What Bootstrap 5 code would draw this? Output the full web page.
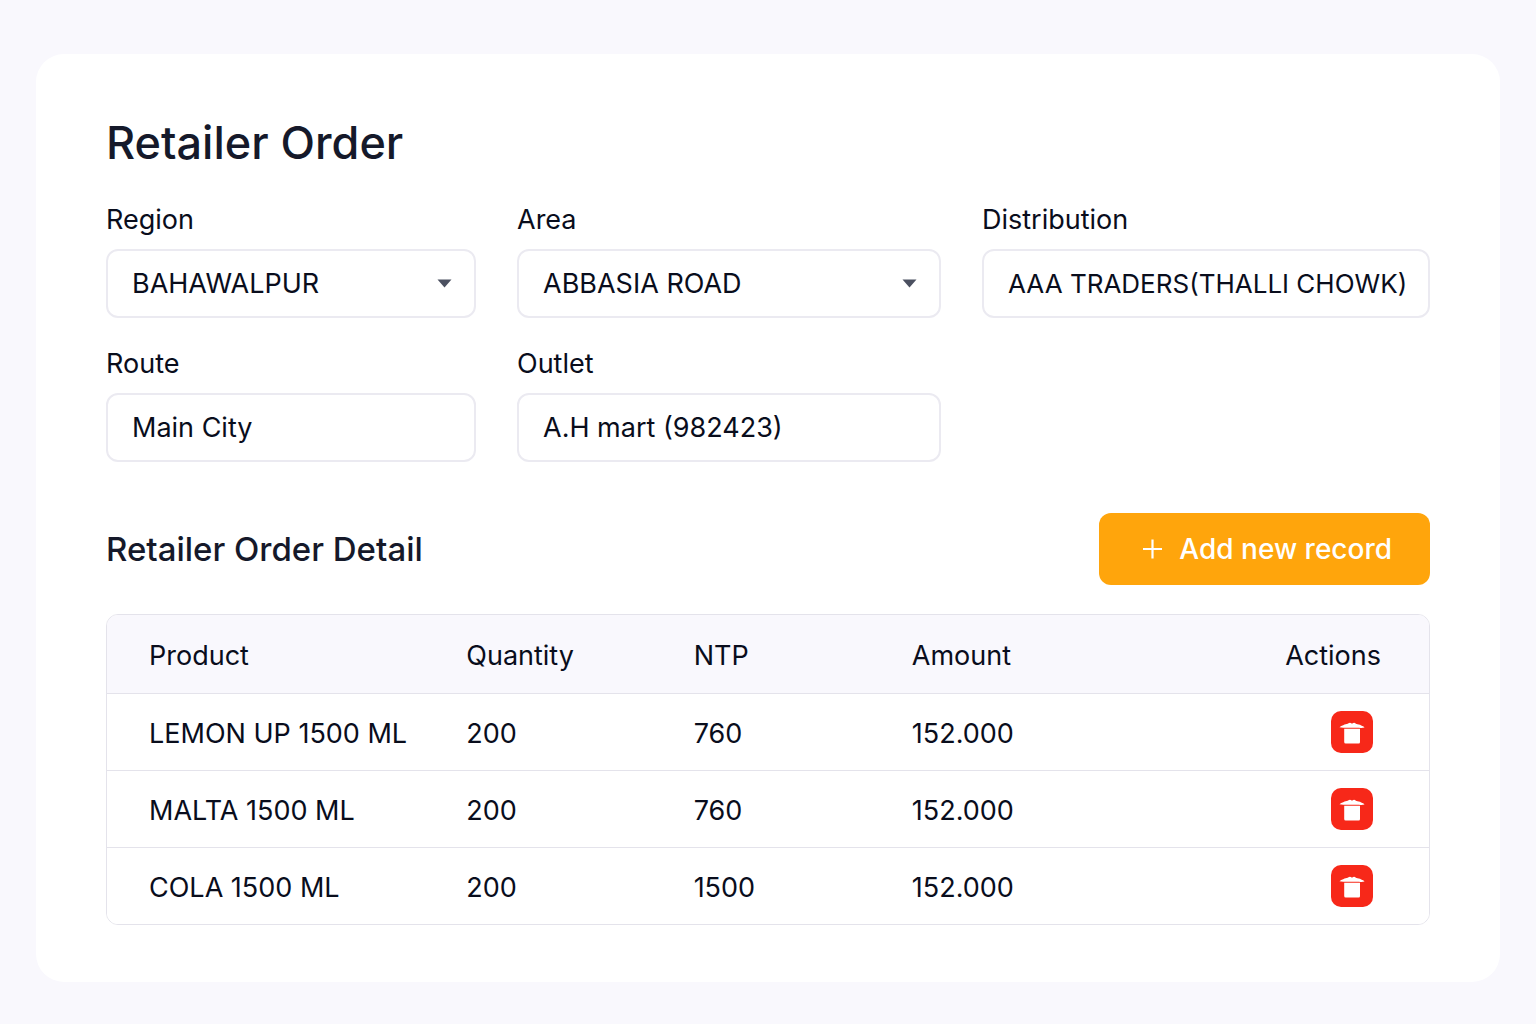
<!DOCTYPE html>
<html lang="en">
<head>
<meta charset="utf-8">
<meta name="viewport" content="width=device-width, initial-scale=1">
<title>Retailer Order</title>
<link href="https://cdn.jsdelivr.net/npm/bootstrap@5.3.0/dist/css/bootstrap.min.css" rel="stylesheet">
<style>
  body { background: #f9f8fd; color: #090d1c; font-family: Inter, "Liberation Sans", sans-serif; font-size: 27px; line-height: 36px; }
  .order-page { padding: 54px 36px 43px; }
  .order-card { border-radius: 28px; padding: 61px 70px 57px; }
  .page-title { font-size: 45px; line-height: 56px; font-weight: 500; color: #15192a; margin-bottom: 31px; }
  .section-title { font-size: 33px; line-height: 44px; font-weight: 500; color: #15192a; }
  .order-fields { display: grid; grid-template-columns: 370fr 424fr 448fr; column-gap: 41px; row-gap: 28px; }
  .form-label { margin-bottom: 11px; display: block; }
  .form-control, .form-select { height: 69px; border: 2px solid #ebeaf1; border-radius: 12px; padding: 0 8px 0 24px; font-size: 27px; line-height: 36px; color: #090d1c; background-color: #fff; }
  .field-long { font-size: 26px; }
  .form-select { padding-right: 56px; background-size: 15px 9px; background-position: right 22px center;
    background-image: url("data:image/svg+xml,%3csvg xmlns='http://www.w3.org/2000/svg' viewBox='0 0 15 9'%3e%3cpath fill='%234b5060' d='M.5.5h14L7.500 8.500z'/%3e%3c/svg%3e"); }
  .detail-bar { margin: 51px 0 29px; }
  .btn-add { --bs-btn-color: #fff; --bs-btn-bg: #ffa50c; --bs-btn-hover-color: #fff; --bs-btn-hover-bg: #f29900; --bs-btn-border-color: transparent;
    height: 72px; padding: 0 38px 0 42px; border: 0; border-radius: 12px; font-size: 28px; font-weight: 500; gap: 16px; }
  .table-frame { border: 1px solid #e4e3eb; border-radius: 12px; overflow: hidden; }
  .order-table { table-layout: fixed; --bs-table-color: #090d1c; --bs-table-bg: #fff; }
  .order-table th, .order-table td { height: 77px; padding: 4px 0 0 42px; font-weight: 400; vertical-align: middle; border-bottom: 1px solid #e4e3eb; }
  .order-table th { height: 78px; background: #f9f8fd; }
  .order-table tbody tr:last-child td { border-bottom: 0; }
  .order-table .action-cell { padding-right: 48px; }
  .order-table td.action-cell { padding-top: 0; }
  .col-product { width: 24%; } .col-quantity { width: 17.2%; } .col-ntp { width: 16.5%; } .col-actions { width: 20%; }
  .btn-remove { width: 42px; height: 42px; border: 0; border-radius: 10px; --bs-btn-bg: #f72819; --bs-btn-hover-bg: #d91f12; }
</style>
<script src="https://cdn.jsdelivr.net/npm/bootstrap@5.3.0/dist/js/bootstrap.bundle.min.js" defer></script>
</head>
<body>
<svg class="d-none" aria-hidden="true">
  <symbol id="trash" viewBox="0 0 42 42">
    <path fill="#fff" d="M8.500 16.300C9.500 15.200 12 14.600 13.500 13.600C15 12.900 16.500 13.500 17.500 12.300Q19 10.800 21 12.800Q23 10.800 24.600 12.400C25.500 13.300 27.500 12.900 29 13.800C30.500 14.800 32.500 15.200 33.500 16.500Q31 17.200 28 16.700H14Q11 17 8.500 16.300z"/>
    <path fill="#fff" d="M13.200 17.800H29V31Q29 32.500 27.700 32.500H14.700Q13.200 32.500 13.200 31z"/>
  </symbol>
</svg>
<main class="order-page">
  <div class="order-card bg-white">
    <h1 class="page-title">Retailer Order</h1>
    <form class="order-fields">
      <div>
        <label class="form-label" for="region">Region</label>
        <select class="form-select" id="region"><option>BAHAWALPUR</option></select>
      </div>
      <div>
        <label class="form-label" for="area">Area</label>
        <select class="form-select" id="area"><option>ABBASIA ROAD</option></select>
      </div>
      <div>
        <label class="form-label" for="distribution">Distribution</label>
        <input class="form-control field-long" id="distribution" type="text" value="AAA TRADERS(THALLI CHOWK)">
      </div>
      <div>
        <label class="form-label" for="route">Route</label>
        <input class="form-control" id="route" type="text" value="Main City">
      </div>
      <div>
        <label class="form-label" for="outlet">Outlet</label>
        <input class="form-control" id="outlet" type="text" value="A.H mart (982423)">
      </div>
    </form>
    <div class="detail-bar d-flex justify-content-between align-items-center">
      <h2 class="section-title mb-0">Retailer Order Detail</h2>
      <button type="button" class="btn btn-add d-flex align-items-center">
        <svg width="22" height="22" viewBox="0 0 22 22" aria-hidden="true"><path d="M11.500 1.500v19M2 11h19" stroke="#fff" stroke-width="2.200"/></svg>
        Add new record
      </button>
    </div>
    <div class="table-frame">
      <table class="table order-table mb-0">
        <thead>
          <tr><th class="col-product" scope="col">Product</th><th class="col-quantity" scope="col">Quantity</th><th class="col-ntp" scope="col">NTP</th><th scope="col">Amount</th><th class="col-actions action-cell text-end" scope="col">Actions</th></tr>
        </thead>
        <tbody>
          <tr><td>LEMON UP 1500 ML</td><td>200</td><td>760</td><td>152.000</td>
            <td class="action-cell text-end"><button type="button" class="btn btn-remove p-0 me-2 d-inline-flex" aria-label="Delete LEMON UP 1500 ML"><svg width="42" height="42" aria-hidden="true"><use href="#trash"/></svg></button></td></tr>
          <tr><td>MALTA 1500 ML</td><td>200</td><td>760</td><td>152.000</td>
            <td class="action-cell text-end"><button type="button" class="btn btn-remove p-0 me-2 d-inline-flex" aria-label="Delete MALTA 1500 ML"><svg width="42" height="42" aria-hidden="true"><use href="#trash"/></svg></button></td></tr>
          <tr><td>COLA 1500 ML</td><td>200</td><td>1500</td><td>152.000</td>
            <td class="action-cell text-end"><button type="button" class="btn btn-remove p-0 me-2 d-inline-flex" aria-label="Delete COLA 1500 ML"><svg width="42" height="42" aria-hidden="true"><use href="#trash"/></svg></button></td></tr>
        </tbody>
      </table>
    </div>
  </div>
</main>
</body>
</html>
